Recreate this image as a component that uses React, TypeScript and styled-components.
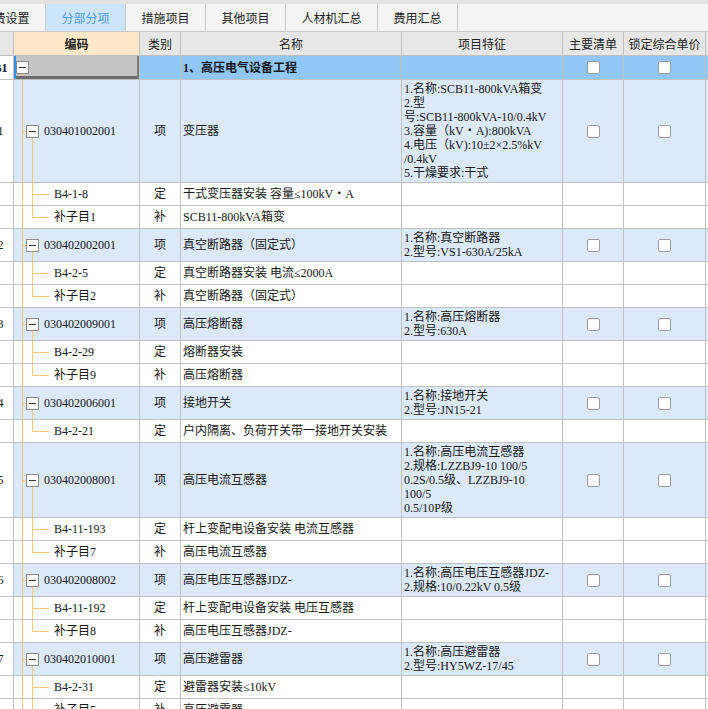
import React from 'react';
import styled, { createGlobalStyle, css } from 'styled-components';

const GRID = '#c0c0c0';
const TREE = '#ffc978';
const BODY_FONT = `"Liberation Serif", "Noto Sans CJK SC", serif`;
const UI_FONT = `"Noto Sans CJK SC", "Noto Sans", sans-serif`;

const W = { num: 26, code: 126, type: 41, name: 221, feat: 161, main: 61, lock: 82, unit: 60 };

type Tone = 'header' | 'section' | 'item' | 'child';
type TreeKind = 'section' | 'item' | 'child' | 'lastChild';

const toneBg: Record<Tone, string> = {
  header: '#e7e7e7',
  section: '#90c7f7',
  item: '#dce9fb',
  child: '#ffffff',
};

const GlobalStyle = createGlobalStyle`
  html, body { margin: 0; padding: 0; background: #fff; }
  body {
    width: 708px; height: 709px; overflow: hidden;
    font-family: ${BODY_FONT};
    font-size: 12px;
    color: #161616;
  }
`;

const Page = styled.div`
  width: 708px;
  height: 709px;
  overflow: hidden;
  display: flex;
  flex-direction: column;
`;

const TabBar = styled.div`
  display: flex;
  flex: none;
  height: 32px;
  box-sizing: border-box;
  border-top: 4px solid #e3e3e3;
  border-bottom: 1px solid #c9c9c9;
  background: #f4f4f4;
  margin-left: -34px;
  font-family: ${UI_FONT};
  font-size: 12px;
`;

const Tab = styled.div<{ $active?: boolean; $w?: number }>`
  flex: none;
  width: ${p => p.$w ?? 80}px;
  box-sizing: border-box;
  border-right: 1px solid #c9c9c9;
  display: flex;
  align-items: center;
  justify-content: center;
  background: ${p => (p.$active ? '#cde5fb' : 'transparent')};
  color: ${p => (p.$active ? '#4e9be4' : '#222')};
`;

const Table = styled.div`
  display: flex;
  flex-direction: column;
  margin-left: -12px;
`;

const Row = styled.div<{ $tone: Tone }>`
  display: flex;
  flex: none;
  background: ${p => toneBg[p.$tone]};
  min-height: ${p => (p.$tone === 'header' || p.$tone === 'section' ? 24 : 23)}px;
`;

const Cell = styled.div<{ $w: number; $center?: boolean }>`
  flex: none;
  width: ${p => p.$w}px;
  box-sizing: border-box;
  border-right: 1px solid ${GRID};
  border-bottom: 1px solid ${GRID};
  display: flex;
  align-items: center;
  justify-content: ${p => (p.$center ? 'center' : 'flex-start')};
  padding: 0 2px;
  line-height: 14px;
  white-space: nowrap;
  overflow: hidden;
`;

const HeadCell = styled(Cell)<{ $hl?: boolean }>`
  font-family: ${UI_FONT};
  color: #222;
  justify-content: center;
  ${p =>
    p.$hl &&
    css`
      background: #fde8c9;
      font-weight: bold;
    `}
`;

const NumCell = styled(Cell)<{ $bold?: boolean }>`
  background: #fff;
  justify-content: center;
  font-weight: ${p => (p.$bold ? 'bold' : 'normal')};
`;

const line = (x: string, y: string, w: string, h: string) =>
  `linear-gradient(${TREE}, ${TREE}) ${x} ${y} / ${w} ${h} no-repeat`;

const treeBg = (k: TreeKind) => {
  const main = line('8px', '0', '1px', '100%');
  switch (k) {
    case 'section':
      return `${line('8px', '100%', '1px', '30%')}, #c4c4c4`;
    case 'item':
      return `${main}, ${line('8px', '50%', '5px', '1px')}, ${line('18px', '100%', '1px', '50%')}`;
    case 'child':
      return `${main}, ${line('18px', '0', '1px', '100%')}, ${line('18px', '50%', '17px', '1px')}`;
    case 'lastChild':
      return `${main}, ${line('18px', '0', '1px', '50%')}, ${line('18px', '50%', '17px', '1px')}`;
  }
};

const CodeCell = styled(Cell)<{ $kind: TreeKind }>`
  background: ${p => treeBg(p.$kind)};
  padding-left: ${p => (p.$kind === 'section' ? 2 : p.$kind === 'item' ? 12 : 40)}px;
  gap: 5px;
  ${p =>
    p.$kind === 'section' &&
    css`
      box-shadow: inset 2px 0 0 #3a8fe8, inset -2px 0 0 #7a7a7a, inset 0 -3px 0 #6c6c6c;
    `}
`;

const ExpandBox = styled.span`
  flex: none;
  width: 13px;
  height: 13px;
  box-sizing: border-box;
  border: 1px solid #8c8c8c;
  background: #fff;
  display: flex;
  align-items: center;
  justify-content: center;
  &::after {
    content: '';
    width: 7px;
    height: 1px;
    background: #333;
  }
`;

const NameCell = styled(Cell)<{ $bold?: boolean }>`
  font-weight: ${p => (p.$bold ? 'bold' : 'normal')};
`;

const FeatCell = styled(Cell)`
  display: block;
  padding: 2px 2px;
`;

const FeatLine = styled.div`
  height: 14px;
  line-height: 14px;
`;

const Check = styled.span`
  width: 13px;
  height: 13px;
  box-sizing: border-box;
  border: 1px solid #9c9c9c;
  border-radius: 2px;
  background: #fff;
`;

type Child = { code: string; type: string; name: string };
type Item = { num: string; code: string; name: string; feat: string[]; children: Child[] };

const items: Item[] = [
  {
    num: '1',
    code: '030401002001',
    name: '变压器',
    feat: [
      '1.名称:SCB11-800kVA箱变',
      '2.型',
      '号:SCB11-800kVA-10/0.4kV',
      '3.容量（kV・A):800kVA',
      '4.电压（kV):10±2×2.5%kV',
      '/0.4kV',
      '5.干燥要求:干式',
    ],
    children: [
      { code: 'B4-1-8', type: '定', name: '干式变压器安装 容量≤100kV・A' },
      { code: '补子目1', type: '补', name: 'SCB11-800kVA箱变' },
    ],
  },
  {
    num: '2',
    code: '030402002001',
    name: '真空断路器（固定式）',
    feat: ['1.名称:真空断路器', '2.型号:VS1-630A/25kA'],
    children: [
      { code: 'B4-2-5', type: '定', name: '真空断路器安装 电流≤2000A' },
      { code: '补子目2', type: '补', name: '真空断路器（固定式）' },
    ],
  },
  {
    num: '3',
    code: '030402009001',
    name: '高压熔断器',
    feat: ['1.名称:高压熔断器', '2.型号:630A'],
    children: [
      { code: 'B4-2-29', type: '定', name: '熔断器安装' },
      { code: '补子目9', type: '补', name: '高压熔断器' },
    ],
  },
  {
    num: '4',
    code: '030402006001',
    name: '接地开关',
    feat: ['1.名称:接地开关', '2.型号:JN15-21'],
    children: [{ code: 'B4-2-21', type: '定', name: '户内隔离、负荷开关带一接地开关安装' }],
  },
  {
    num: '5',
    code: '030402008001',
    name: '高压电流互感器',
    feat: ['1.名称:高压电流互感器', '2.规格:LZZBJ9-10 100/5', '0.2S/0.5级、LZZBJ9-10', '100/5', '0.5/10P级'],
    children: [
      { code: 'B4-11-193', type: '定', name: '杆上变配电设备安装 电流互感器' },
      { code: '补子目7', type: '补', name: '高压电流互感器' },
    ],
  },
  {
    num: '6',
    code: '030402008002',
    name: '高压电压互感器JDZ-',
    feat: ['1.名称:高压电压互感器JDZ-', '2.规格:10/0.22kV 0.5级'],
    children: [
      { code: 'B4-11-192', type: '定', name: '杆上变配电设备安装 电压互感器' },
      { code: '补子目8', type: '补', name: '高压电压互感器JDZ-' },
    ],
  },
  {
    num: '7',
    code: '030402010001',
    name: '高压避雷器',
    feat: ['1.名称:高压避雷器', '2.型号:HY5WZ-17/45'],
    children: [
      { code: 'B4-2-31', type: '定', name: '避雷器安装≤10kV' },
      { code: '补子目5', type: '补', name: '高压避雷器' },
    ],
  },
];

const tabs = [
  { label: '取费设置' },
  { label: '分部分项', active: true },
  { label: '措施项目' },
  { label: '其他项目' },
  { label: '人材机汇总', w: 92 },
  { label: '费用汇总' },
];

export default function App() {
  return (
    <Page>
      <GlobalStyle />
      <TabBar>
        {tabs.map(t => (
          <Tab key={t.label} $active={t.active} $w={t.w}>
            {t.label}
          </Tab>
        ))}
      </TabBar>
      <Table>
        <Row $tone="header">
          <HeadCell $w={W.num} />
          <HeadCell $w={W.code} $hl>编码</HeadCell>
          <HeadCell $w={W.type}>类别</HeadCell>
          <HeadCell $w={W.name}>名称</HeadCell>
          <HeadCell $w={W.feat}>项目特征</HeadCell>
          <HeadCell $w={W.main}>主要清单</HeadCell>
          <HeadCell $w={W.lock}>锁定综合单价</HeadCell>
          <HeadCell $w={W.unit}>单位</HeadCell>
        </Row>
        <Row $tone="section">
          <NumCell $w={W.num} $bold>B1</NumCell>
          <CodeCell $w={W.code} $kind="section">
            <ExpandBox />
          </CodeCell>
          <Cell $w={W.type} />
          <NameCell $w={W.name} $bold>1、高压电气设备工程</NameCell>
          <Cell $w={W.feat} />
          <Cell $w={W.main} $center>
            <Check />
          </Cell>
          <Cell $w={W.lock} $center>
            <Check />
          </Cell>
          <Cell $w={W.unit} />
        </Row>
        {items.map(it => (
          <React.Fragment key={it.code}>
            <Row $tone="item">
              <NumCell $w={W.num}>{it.num}</NumCell>
              <CodeCell $w={W.code} $kind="item">
                <ExpandBox />
                {it.code}
              </CodeCell>
              <Cell $w={W.type} $center>项</Cell>
              <NameCell $w={W.name}>{it.name}</NameCell>
              <FeatCell $w={W.feat}>
                {it.feat.map((f, i) => (
                  <FeatLine key={i}>{f}</FeatLine>
                ))}
              </FeatCell>
              <Cell $w={W.main} $center>
                <Check />
              </Cell>
              <Cell $w={W.lock} $center>
                <Check />
              </Cell>
              <Cell $w={W.unit}>台</Cell>
            </Row>
            {it.children.map((c, i) => (
              <Row $tone="child" key={c.code}>
                <NumCell $w={W.num} />
                <CodeCell $w={W.code} $kind={i === it.children.length - 1 ? 'lastChild' : 'child'}>
                  {c.code}
                </CodeCell>
                <Cell $w={W.type} $center>{c.type}</Cell>
                <NameCell $w={W.name}>{c.name}</NameCell>
                <Cell $w={W.feat} />
                <Cell $w={W.main} />
                <Cell $w={W.lock} />
                <Cell $w={W.unit}>台</Cell>
              </Row>
            ))}
          </React.Fragment>
        ))}
      </Table>
    </Page>
  );
}
